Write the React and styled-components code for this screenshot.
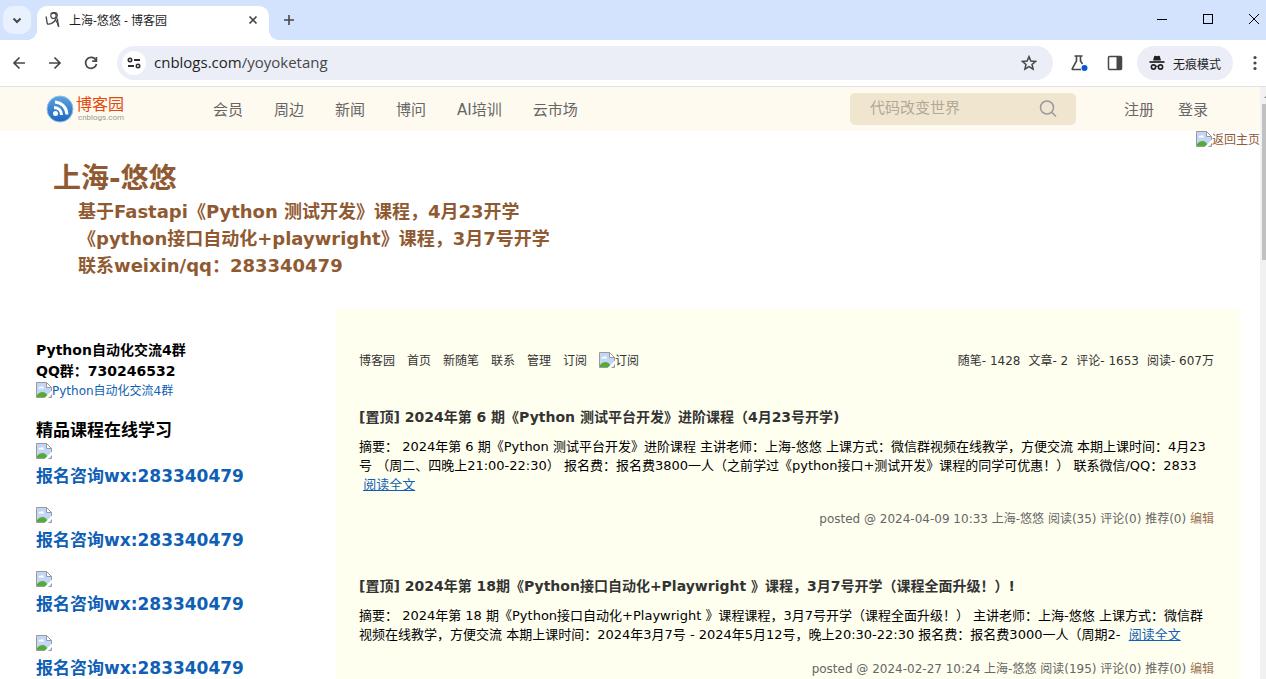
import React from 'react';
import styled, { createGlobalStyle } from 'styled-components';

const colors = {
  frame: '#d3e3fd',
  field: '#ebeef7',
  icon: '#474747',
  cream: '#fffaf0',
  search: '#f0e6d0',
  paper: '#fffff0',
  brown: '#8f5a32',
  link: '#0f5fb5',
  textNav: '#666',
  textPrimary: '#333',
};

const siteLinks = ['会员', '周边', '新闻', '博问', 'AI培训', '云市场'];

const blogLinks = ['博客园', '首页', '新随笔', '联系', '管理', '订阅'];

const stats = ['随笔- 1428', '文章- 2', '评论- 1653', '阅读- 607万'];

const courses = [1, 2, 3, 4];

const posts = [
  {
    title: '[置顶] 2024年第 6 期《Python 测试平台开发》进阶课程（4月23号开学)',
    summary: '摘要： 2024年第 6 期《Python 测试平台开发》进阶课程 主讲老师：上海-悠悠 上课方式：微信群视频在线教学，方便交流 本期上课时间：4月23号 （周二、四晚上21:00-22:30） 报名费：报名费3800一人（之前学过《python接口+测试开发》课程的同学可优惠！） 联系微信/QQ：2833',
    date: '2024-04-09 10:33',
    reads: 35,
  },
  {
    title: '[置顶] 2024年第 18期《Python接口自动化+Playwright 》课程，3月7号开学（课程全面升级！）!',
    summary: '摘要： 2024年第 18 期《Python接口自动化+Playwright 》课程课程，3月7号开学（课程全面升级！） 主讲老师：上海-悠悠 上课方式：微信群视频在线教学，方便交流 本期上课时间：2024年3月7号 - 2024年5月12号，晚上20:30-22:30 报名费：报名费3000一人（周期2-',
    date: '2024-02-27 10:24',
    reads: 195,
  },
];

const BrokenImage = () => (
  <BrokenIcon viewBox="0 0 16 16" aria-hidden="true">
    <path d="M.5.5h10l5 5v10H.5z" fill="#c3d6f7" stroke="#9a9a9a" />
    <path d="M2.500 6.500c-.2-1.500 1.300-2.300 2.200-1.500 1-1.500 3-.8 2.800.8.800 0 .8.700.5.700z" fill="#fff" />
    <path d="M1 15v-2c1.500-2 3.500-3 5.500-3s4 1.500 5 3.500V15z" fill="#55ac33" />
    <path d="M8 16.500 16.500 8v3.500l-5 5z" fill="#fff" />
    <path d="M10.500.5v5h5z" fill="#fff" stroke="#9a9a9a" />
  </BrokenIcon>
);

const Tabs = () => (
  <TabStrip>
    <TabSearch aria-label="搜索标签页">
      <Icon viewBox="0 0 16 16" $size={16}><path d="m4.500 6.500 3.500 3.500 3.500-3.500" strokeWidth="2" /></Icon>
    </TabSearch>
    <Tab>
      <Icon viewBox="0 0 16 16" $size={16}>
        <path d="M1 4.500c.8 2.500.6 5 1.500 7.500 2.500.5 5.500-1 8-4" strokeWidth="1.300" />
        <circle cx="8.500" cy="3.800" r="2.700" strokeWidth="1.200" />
        <path d="M5.500 1.800C8 0 12.500 0 12.200 3.500c-.2 3-2 3.500-1.700 4.500 1.500 1.500 2.500 3 3.200 7" strokeWidth="1.300" />
        <path d="M12.500 6.500c0 3 .3 5 1.200 8" strokeWidth="1.300" />
      </Icon>
      <TabTitle>上海-悠悠 - 博客园</TabTitle>
      <PlainButton aria-label="关闭">
        <Icon viewBox="0 0 16 16" $size={16}><path d="m4.500 4.500 7 7m0-7-7 7" strokeWidth="1.700" /></Icon>
      </PlainButton>
    </Tab>
    <NewTab aria-label="新标签页">
      <Icon viewBox="0 0 16 16" $size={16}><path d="M8 3v10M3 8h10" strokeWidth="1.600" /></Icon>
    </NewTab>
    <WindowControls>
      <PlainButton aria-label="最小化">
        <Icon viewBox="0 0 12 12" $size={12} $color="#000" shapeRendering="crispEdges"><path d="M1 6.500h10" /></Icon>
      </PlainButton>
      <PlainButton aria-label="最大化">
        <Icon viewBox="0 0 12 12" $size={12} $color="#000" shapeRendering="crispEdges"><path d="M1.500 1.500h9v9h-9z" /></Icon>
      </PlainButton>
      <PlainButton aria-label="关闭窗口">
        <Icon viewBox="0 0 12 12" $size={12} $color="#000"><path d="m1 1 10 10m0-10L1 11" /></Icon>
      </PlainButton>
    </WindowControls>
  </TabStrip>
);

const Toolbar = () => (
  <ToolbarRow>
    <NavButtons>
      <PlainButton aria-label="后退">
        <Icon viewBox="0 0 16 16" $size={16}><path d="M14 8H3m5.500-5.500L3 8l5.500 5.500" strokeWidth="1.700" /></Icon>
      </PlainButton>
      <PlainButton aria-label="前进">
        <Icon viewBox="0 0 16 16" $size={16}><path d="M2 8h11M7.500 2.500 13 8l-5.500 5.500" strokeWidth="1.700" /></Icon>
      </PlainButton>
      <PlainButton aria-label="重新加载">
        <Icon viewBox="0 0 16 16" $size={16}>
          <path d="M13 5.300A5.500 5.500 0 1 0 13.500 9" strokeWidth="1.700" />
          <path d="M13.400 2v4.200H9.200" strokeWidth="1.700" />
        </Icon>
      </PlainButton>
    </NavButtons>
    <Omnibox>
      <SiteInfo aria-label="网站信息">
        <Icon viewBox="0 0 16 16" $size={16} $color="#303030">
          <circle cx="4" cy="5" r="1.700" strokeWidth="1.600" />
          <path d="M8 5h6M2 11h6" strokeWidth="2" />
          <circle cx="12" cy="11" r="1.700" strokeWidth="1.600" />
        </Icon>
      </SiteInfo>
      <Url>cnblogs.com<span>/yoyoketang</span></Url>
      <PlainButton aria-label="添加书签">
        <Icon viewBox="0 0 18 18" $size={16}>
          <path d="m9 1.800 2.100 4.900 5.300.5-4 3.500 1.200 5.200L9 13.100l-4.600 2.800 1.200-5.200-4-3.500 5.300-.5z" strokeWidth="1.700" />
        </Icon>
      </PlainButton>
    </Omnibox>
    <Tools>
      <PlainButton aria-label="实验">
        <Icon viewBox="0 0 18 18" $size={18}>
          <path d="M4.500 2h8M6.500 2v5L2.300 14.500c-.3.600 0 1 .6 1H11M10.500 2v5l2 3" strokeWidth="1.600" />
          <circle cx="14.500" cy="14" r="3" fill="#0b57d0" stroke="none" />
        </Icon>
      </PlainButton>
      <PlainButton aria-label="侧边栏">
        <Icon viewBox="0 0 16 16" $size={16}>
          <rect x="1.500" y="1.500" width="13" height="13" rx="1" strokeWidth="1.500" />
          <path d="M9.500 1.500h5v13h-5z" fill={colors.icon} stroke="none" />
        </Icon>
      </PlainButton>
    </Tools>
    <Incognito>
      <Icon viewBox="0 0 16 16" $size={16} $color="#1f1f1f">
        <path d="M4 5.500 5.200 1.300c.2-.6.700-.8 1.200-.6l1.600.5 1.600-.5c.5-.2 1 0 1.200.6L12 5.500z" fill="#1f1f1f" stroke="none" />
        <path d="M.5 7h15" strokeWidth="1.700" />
        <circle cx="4.500" cy="12" r="2.100" strokeWidth="1.600" />
        <circle cx="11.500" cy="12" r="2.100" strokeWidth="1.600" />
        <path d="M6.500 11.500q1.500-.8 3 0" />
      </Icon>
      无痕模式
    </Incognito>
    <PlainButton aria-label="更多">
      <Icon viewBox="0 0 16 16" $size={16}>
        <g fill={colors.icon} stroke="none">
          <circle cx="8" cy="2.500" r="1.600" />
          <circle cx="8" cy="8" r="1.600" />
          <circle cx="8" cy="13.500" r="1.600" />
        </g>
      </Icon>
    </PlainButton>
  </ToolbarRow>
);

const SiteHeader = () => (
  <SiteBar>
    <Logo href="#home">
      <LogoMark viewBox="0 0 28 28" aria-hidden="true">
        <defs>
          <linearGradient id="mark" x1="0" y1="0" x2="0" y2="1">
            <stop offset="0" stopColor="#5ba3df" />
            <stop offset="1" stopColor="#1d66c2" />
          </linearGradient>
        </defs>
        <circle cx="14" cy="14" r="13" fill="url(#mark)" stroke="#8fc0ea" />
        <circle cx="9.500" cy="18.500" r="2.500" fill="#fff" />
        <path d="M8 12.500c4.500 0 7.500 3 7.500 7.500M9 7c6.500.5 11.500 5 12 12.500" fill="none" stroke="#fff" strokeWidth="3" />
      </LogoMark>
      <LogoText>
        博客园
        <small>cnblogs.com</small>
      </LogoText>
    </Logo>
    <SiteNav>
      {siteLinks.map((label) => <a href="#nav" key={label}>{label}</a>)}
    </SiteNav>
    <SearchBox>
      <input aria-label="搜索" placeholder="代码改变世界" />
      <PlainButton aria-label="搜索">
        <Icon viewBox="0 0 18 18" $size={18} $color="#999">
          <circle cx="8" cy="7.500" r="6.500" strokeWidth="1.500" />
          <path d="m12.500 12 4.500 4.500" strokeWidth="1.500" />
        </Icon>
      </PlainButton>
    </SearchBox>
    <Account>
      <a href="#register">注册</a>
      <a href="#login">登录</a>
    </Account>
  </SiteBar>
);

const Sidebar = () => (
  <Aside>
    <GroupText>
      Python自动化交流4群
      <br />
      QQ群：730246532
    </GroupText>
    <ImageLink href="#group">
      <BrokenImage />
      Python自动化交流4群
    </ImageLink>
    <SideTitle>精品课程在线学习</SideTitle>
    {courses.map((id) => (
      <Course href="#course" key={id}>
        <BrokenImage />
        <strong>报名咨询wx:283340479</strong>
      </Course>
    ))}
  </Aside>
);

const Post = ({
  title,
  summary,
  date,
  reads
}) => (
  <Article>
    <PostTitle><a href="#post">{title}</a></PostTitle>
    <Summary>
      {summary}
      {' \u00a0'}
      <a href="#post">阅读全文</a>
    </Summary>
    <PostMeta>
      {`posted @ ${date} 上海-悠悠 阅读(${reads}) 评论(0) 推荐(0) `}
      <a href="#edit">编辑</a>
    </PostMeta>
  </Article>
);

const App = () => (
  <Browser>
    <GlobalStyle />
    <Tabs />
    <Toolbar />
    <Viewport>
      <Page>
        <SiteHeader />
        <HomeRow>
          <ImageLink href="#home" $color={colors.brown}>
            <BrokenImage />
            返回主页
          </ImageLink>
        </HomeRow>
        <BlogHeader>
          <BlogTitle>上海-悠悠</BlogTitle>
          <BlogSubtitle>
            基于Fastapi《Python 测试开发》课程，4月23开学
            <br />
            《python接口自动化+playwright》课程，3月7号开学
            <br />
            联系weixin/qq：283340479
          </BlogSubtitle>
        </BlogHeader>
        <Columns>
          <Sidebar />
          <Main>
            <BlogNav>
              {blogLinks.map((label) => <a href="#blog" key={label}>{label}</a>)}
              <ImageLink href="#rss" $color={colors.textPrimary}>
                <BrokenImage />
                订阅
              </ImageLink>
              <Stats>
                {stats.map((item) => <span key={item}>{item}</span>)}
              </Stats>
            </BlogNav>
            {posts.map((post) => <Post key={post.date} {...post} />)}
          </Main>
        </Columns>
      </Page>
      <ScrollTrack>
        <ScrollArrow viewBox="0 0 4 17" aria-hidden="true">
          <path d="M2 11h2V9z" fill="#888" />
        </ScrollArrow>
        <ScrollThumb />
      </ScrollTrack>
    </Viewport>
  </Browser>
);

const GlobalStyle = createGlobalStyle`
  * {
    box-sizing: border-box;
  }

  body {
    margin: 0;
    background: #fff;
    font-family: "DejaVu Sans", "Noto Sans CJK SC", sans-serif;
    font-size: 12px;
    text-spacing-trim: space-all;
  }

  a {
    color: inherit;
    text-decoration: none;
  }

  h1, h2, h3, p {
    margin: 0;
  }
`;

const Browser = styled.div`
  height: 100vh;
  display: flex;
  flex-direction: column;
  overflow: hidden;
`;

const Icon = styled.svg`
  display: block;
  flex: none;
  width: ${({ $size }) => $size}px;
  height: ${({ $size }) => $size}px;
  fill: none;
  stroke: ${({ $color }) => $color || colors.icon};
`;

const BrokenIcon = styled.svg`
  display: block;
  flex: none;
  width: 16px;
  height: 16px;
`;

const PlainButton = styled.button`
  display: flex;
  padding: 0;
  border: 0;
  background: none;
`;

const TabStrip = styled.div`
  flex: none;
  height: 40px;
  padding: 6px 6px 0 3px;
  display: flex;
  background-color: ${colors.frame};
`;

const TabSearch = styled(PlainButton)`
  width: 28px;
  height: 28px;
  align-items: center;
  justify-content: center;
  border-radius: 10px;
  background-color: #eaf1fe;
`;

const Tab = styled.div`
  position: relative;
  width: 232px;
  margin-left: 6px;
  padding: 0 8px 6px;
  display: flex;
  align-items: center;
  border-radius: 10px 10px 0 0;
  background-color: #fff;

  &::before,
  &::after {
    content: "";
    position: absolute;
    bottom: 0;
    width: 10px;
    height: 10px;
  }

  &::before {
    right: 100%;
    background: radial-gradient(circle at 0 0, transparent 10px, #fff 10px);
  }

  &::after {
    left: 100%;
    background: radial-gradient(circle at 100% 0, transparent 10px, #fff 10px);
  }
`;

const TabTitle = styled.span`
  flex: 1;
  margin-left: 8px;
  color: #1f1f1f;
  font-family: "Open Sans", "Noto Sans CJK SC", sans-serif;
`;

const NewTab = styled(PlainButton)`
  height: 28px;
  margin-left: 12px;
  align-items: center;
`;

const WindowControls = styled.div`
  height: 26px;
  margin-left: auto;
  display: flex;
  align-items: center;
  gap: 34px;
`;

const ToolbarRow = styled.div`
  flex: none;
  height: 47px;
  padding: 0 3px 0 11px;
  display: flex;
  align-items: center;
  border-bottom: 1px solid #dfe1e5;
  background-color: #fff;
`;

const NavButtons = styled.div`
  margin-right: 18px;
  display: flex;
  gap: 20px;
`;

const Omnibox = styled.div`
  flex: 1;
  height: 34px;
  padding: 0 16px 0 5px;
  display: flex;
  align-items: center;
  border-radius: 17px;
  background-color: ${colors.field};
`;

const SiteInfo = styled(PlainButton)`
  width: 24px;
  height: 24px;
  align-items: center;
  justify-content: center;
  border-radius: 50%;
  background-color: #fff;
`;

const Url = styled.span`
  flex: 1;
  margin-left: 8px;
  color: #1f1f1f;
  font-family: "Open Sans", sans-serif;
  font-size: 15px;
  line-height: 20px;
  padding-bottom: 2px;

  span {
    color: #474747;
  }
`;

const Tools = styled.div`
  margin: 0 14px 0 17px;
  display: flex;
  align-items: center;
  gap: 19px;
`;

const Incognito = styled.div`
  height: 34px;
  margin-right: 14px;
  padding: 0 12px;
  display: flex;
  align-items: center;
  gap: 8px;
  border-radius: 17px;
  background-color: ${colors.field};
  color: #1f1f1f;
`;

const Viewport = styled.div`
  flex: 1;
  min-height: 0;
  display: flex;
`;

const Page = styled.div`
  flex: 1;
  min-width: 0;
  overflow: hidden;
`;

const ScrollTrack = styled.div`
  flex: none;
  width: 6px;
  padding-left: 2px;
  background-color: #f1f1f1;
`;

const ScrollArrow = styled.svg`
  display: block;
  width: 4px;
  height: 17px;
`;

const ScrollThumb = styled.div`
  height: 156px;
  background-color: #c1c1c1;
`;

const SiteBar = styled.header`
  height: 44px;
  padding: 0 52px 0 46px;
  display: flex;
  align-items: center;
  background-color: ${colors.cream};
  color: ${colors.textNav};
  font-size: 15px;
`;

const Logo = styled.a`
  width: 167px;
  display: flex;
  align-items: center;
  gap: 2px;
`;

const LogoMark = styled.svg`
  width: 28px;
  height: 28px;
`;

const LogoText = styled.span`
  color: #e2490f;
  font-size: 16px;
  line-height: 18px;

  small {
    display: block;
    padding-left: 2px;
    color: #999;
    font-family: Roboto, sans-serif;
    font-size: 8px;
    line-height: 8px;
  }
`;

const SiteNav = styled.nav`
  display: flex;
  gap: 31px;
  padding-bottom: 2px;
`;

const SearchBox = styled.form`
  width: 226px;
  height: 32px;
  margin-left: auto;
  padding: 0 19px 0 20px;
  display: flex;
  align-items: center;
  border-radius: 5px;
  background-color: ${colors.search};

  input {
    flex: 1;
    min-width: 0;
    padding: 0 0 2px;
    border: 0;
    outline: 0;
    background: none;
    font: inherit;
  }

  input::placeholder {
    color: #b0a898;
  }
`;

const Account = styled.div`
  margin-left: 48px;
  padding-bottom: 2px;
  display: flex;
  gap: 24px;
`;

const HomeRow = styled.div`
  display: flex;
  justify-content: flex-end;
`;

const ImageLink = styled.a`
  display: flex;
  align-items: flex-start;
  line-height: 18px;
  color: ${({ $color }) => $color || colors.link};
`;

const BlogHeader = styled.div`
  padding: 11px 53px 30px;
  color: ${colors.brown};
`;

const BlogTitle = styled.h1`
  font-size: 28px;
  line-height: 38px;
`;

const BlogSubtitle = styled.h2`
  margin-left: 25px;
  font-size: 18px;
  line-height: 27px;
`;

const Columns = styled.div`
  padding: 0 20px 0 36px;
  display: flex;
`;

const Aside = styled.aside`
  flex: none;
  width: 300px;
  padding-top: 31px;
`;

const GroupText = styled.p`
  font-size: 14px;
  font-weight: bold;
  line-height: 21px;
`;

const SideTitle = styled.h3`
  margin-top: 18px;
  font-size: 17px;
  line-height: 25px;
`;

const Course = styled.a`
  display: block;
  padding-bottom: 14px;
  color: ${colors.link};
  font-size: 17px;
  line-height: 34px;

  strong {
    display: block;
  }
`;

const Main = styled.main`
  flex: 1;
  min-width: 0;
  padding: 43px 26px 40px 23px;
  background-color: ${colors.paper};
`;

const BlogNav = styled.nav`
  display: flex;
  align-items: flex-start;
  gap: 12px;
  margin-bottom: 36px;
  line-height: 18px;
  color: ${colors.textPrimary};
`;

const Stats = styled.div`
  margin-left: auto;
  display: flex;
  gap: 8px;
`;

const Article = styled.article`
  margin-bottom: 47px;
`;

const PostTitle = styled.h2`
  color: ${colors.textPrimary};
  font-size: 14px;
  line-height: 22px;
`;

const Summary = styled.p`
  margin-top: 9px;
  font-size: 13px;
  line-height: 19px;

  a {
    color: ${colors.link};
    text-decoration: underline;
  }
`;

const PostMeta = styled.p`
  margin-top: 16px;
  color: ${colors.textNav};
  line-height: 18px;
  text-align: right;

  a {
    color: #9c7355;
  }
`;

export default App;
